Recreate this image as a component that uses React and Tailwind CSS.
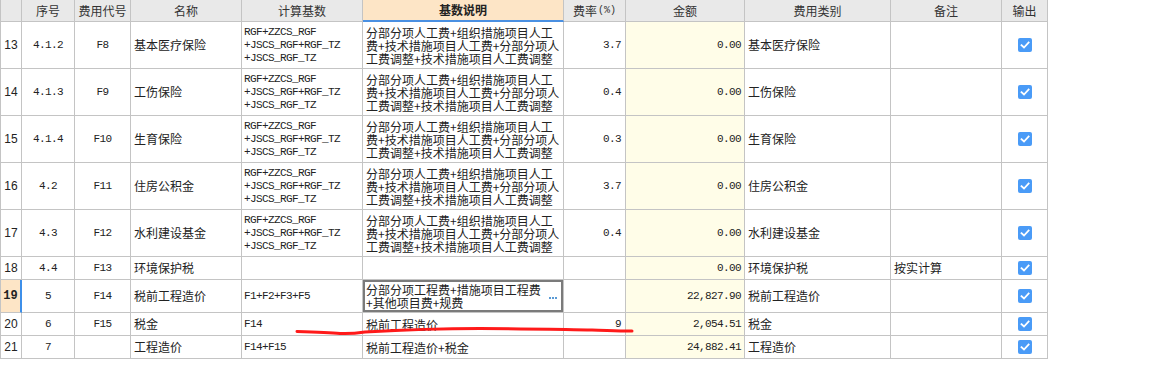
import React from "react";

const COLS = "grid-cols-[22px_53px_56px_111px_121px_201px_62px_119px_146px_111px_46px]";
const CJK = { fontFamily: '"Noto Sans CJK SC", "Noto Sans", sans-serif' };
const MONO = { fontFamily: '"Liberation Mono", "Noto Sans CJK SC", monospace' };

const codes3 = ["RGF+ZZCS_RGF", "+JSCS_RGF+RGF_TZ", "+JSCS_RGF_TZ"];
const desc3 = [
  "分部分项人工费+组织措施项目人工",
  "费+技术措施项目人工费+分部分项人",
  "工费调整+技术措施项目人工费调整",
];

const rows = [
  { n: "13", seq: "4.1.2", code: "F8", name: "基本医疗保险", base: codes3, desc: desc3, rate: "3.7", amt: "0.00", cat: "基本医疗保险", h: "h-[47px]" },
  { n: "14", seq: "4.1.3", code: "F9", name: "工伤保险", base: codes3, desc: desc3, rate: "0.4", amt: "0.00", cat: "工伤保险", h: "h-[47px]" },
  { n: "15", seq: "4.1.4", code: "F10", name: "生育保险", base: codes3, desc: desc3, rate: "0.3", amt: "0.00", cat: "生育保险", h: "h-[47px]" },
  { n: "16", seq: "4.2", code: "F11", name: "住房公积金", base: codes3, desc: desc3, rate: "3.7", amt: "0.00", cat: "住房公积金", h: "h-[47px]" },
  { n: "17", seq: "4.3", code: "F12", name: "水利建设基金", base: codes3, desc: desc3, rate: "0.4", amt: "0.00", cat: "水利建设基金", h: "h-[47px]" },
  { n: "18", seq: "4.4", code: "F13", name: "环境保护税", base: [], desc: [], rate: "", amt: "0.00", cat: "环境保护税", note: "按实计算", h: "h-[23px]" },
  { n: "19", seq: "5", code: "F14", name: "税前工程造价", base: ["F1+F2+F3+F5"], desc: ["分部分项工程费+措施项目工程费", "+其他项目费+规费"], rate: "", amt: "22,827.90", cat: "税前工程造价", h: "h-[33px]", active: true },
  { n: "20", seq: "6", code: "F15", name: "税金", base: ["F14"], desc: ["税前工程造价"], rate: "9", amt: "2,054.51", cat: "税金", h: "h-[23px]" },
  { n: "21", seq: "7", code: "", name: "工程造价", base: ["F14+F15"], desc: ["税前工程造价+税金"], rate: "", amt: "24,882.41", cat: "工程造价", h: "h-[23px]" },
];

function Check() {
  return (
    <div className="w-[14px] h-[14px] rounded-[2px] bg-[#4a9bf7] flex items-center justify-center">
      <svg width="10" height="10" viewBox="0 0 10 10">
        <path d="M1.5 5.2 L4 7.5 L8.6 2.6" stroke="#fff" strokeWidth="1.8" fill="none" strokeLinecap="square" />
      </svg>
    </div>
  );
}

const cell = "border-r border-b border-[#c4c4c4] flex items-center overflow-hidden";

function Lines({ lines, className = "" }) {
  if (!lines.length) return null;
  return <div className={`whitespace-pre leading-[13px] ${className}`}>{lines.join("\n")}</div>;
}

function Header() {
  return (
    <div className={`grid ${COLS} h-[22px] bg-[#e9e9e9] text-[12px] text-[#333]`} style={CJK}>
      <div className={`${cell} border-l`} />
      <div className={`${cell} justify-center`}>序号</div>
      <div className={`${cell} justify-center`}>费用代号</div>
      <div className={`${cell} justify-center`}>名称</div>
      <div className={`${cell} justify-center`}>计算基数</div>
      <div className="border-r border-[#c4c4c4] border-b-2 border-b-[#4a90e2] bg-[#fde5c6] flex items-center justify-center font-bold text-[#222]">基数说明</div>
      <div className={`${cell} justify-center`}>
        费率<span className="text-[10px] ml-[1px]" style={MONO}>(%)</span>
      </div>
      <div className={`${cell} justify-center`}>金额</div>
      <div className={`${cell} justify-center`}>费用类别</div>
      <div className={`${cell} justify-center`}>备注</div>
      <div className={`${cell} justify-center`}>输出</div>
    </div>
  );
}

function Row({ r }) {
  const mono = "text-[11px] tracking-[-0.6px] text-[#222]";
  return (
    <div className={`grid ${COLS} ${r.h} text-[12px] text-[#222]`} style={CJK}>
      {r.active ? (
        <div className="border-l border-l-[#c4c4c4] border-b border-[#c4c4c4] border-r-2 border-r-[#3d8fe9] bg-[#fde5c6] flex items-center justify-center font-bold text-[12px]" style={MONO}>
          {r.n}
        </div>
      ) : (
        <div className={`${cell} border-l justify-center text-[12px]`} style={{ fontFamily: '"Liberation Sans", sans-serif' }}>{r.n}</div>
      )}
      <div className={`${cell} justify-center ${mono}`} style={MONO}>{r.seq}</div>
      <div className={`${cell} justify-center ${mono}`} style={MONO}>{r.code}</div>
      <div className={`${cell} pl-[3px] whitespace-nowrap`}>{r.name}</div>
      <div className={`${cell} pl-[2px] ${mono}`} style={MONO}>
        <Lines lines={r.base} />
      </div>
      {r.active ? (
        <div className="border-r border-b border-[#c4c4c4] bg-white">
          <div className="h-full border-2 border-[#7b7b7b] flex items-center pl-[1px] pr-[4px] overflow-hidden">
            <Lines lines={r.desc} className="flex-1 min-w-0" />
            <div className="flex-none flex gap-[1px] mt-[3px]">
              <div className="w-[2px] h-[2px] bg-[#5b9bd5]" />
              <div className="w-[2px] h-[2px] bg-[#5b9bd5]" />
              <div className="w-[2px] h-[2px] bg-[#5b9bd5]" />
            </div>
          </div>
        </div>
      ) : (
        <div className={`${cell} pl-[3px]`}>
          <Lines lines={r.desc} />
        </div>
      )}
      <div className={`${cell} justify-end pr-[4px] ${mono}`} style={MONO}>{r.rate}</div>
      <div className={`${cell} justify-end pr-[3px] bg-[#fffde8] ${mono}`} style={MONO}>{r.amt}</div>
      <div className={`${cell} pl-[3px] whitespace-nowrap`}>{r.cat}</div>
      <div className={`${cell} pl-[3px] whitespace-nowrap`}>{r.note || ""}</div>
      <div className={`${cell} justify-center`}>
        <Check />
      </div>
    </div>
  );
}

export default function App() {
  return (
    <div className="relative w-[1162px] h-[391px] bg-white overflow-hidden">
      <div className="w-[1048px]">
        <Header />
        {rows.map((r) => (
          <Row key={r.n} r={r} />
        ))}
      </div>
      <svg className="absolute left-0 top-0 pointer-events-none" width="1162" height="391">
        <path
          d="M297 331.5 C 315 332, 330 332.5, 340 333.5 C 350 334, 355 333.5, 365 332 C 400 330, 440 328.5, 480 328.5 C 520 328.5, 560 329.5, 592 330 C 605 330.2, 615 331, 632 331"
          stroke="#ff1a1a"
          strokeWidth="3"
          fill="none"
          strokeLinecap="round"
        />
      </svg>
    </div>
  );
}
